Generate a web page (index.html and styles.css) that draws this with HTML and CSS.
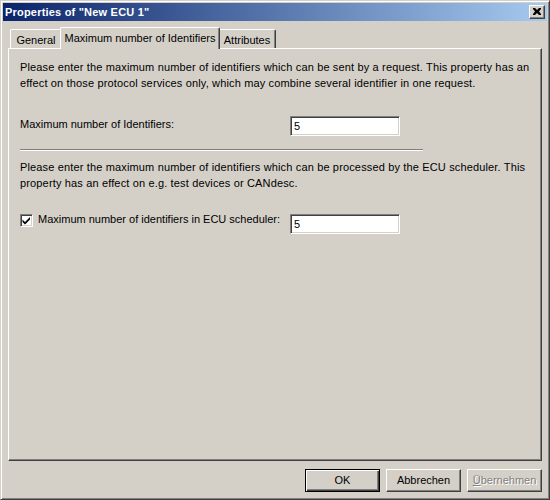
FILE: index.html
```html
<!DOCTYPE html>
<html>
<head>
<meta charset="utf-8">
<link rel="stylesheet" href="styles.css">
</head>
<body>
<div class="window">
  <div class="titlebar">
    <span class="title">Properties of "New ECU 1"</span>
    <span class="close"><svg width="8" height="7" viewBox="0 0 8 7"><path d="M0 0h2l2 2 2-2h2v1l-2 2.5 2 2.5v1h-2l-2-2-2 2h-2v-1l2-2.5-2-2.5z" fill="#000"/></svg></span>
  </div>
  <div class="body">
    <div class="tabs">
      <div class="tab t-general">General</div>
      <div class="tab active t-max">Maximum number of Identifiers</div>
      <div class="tab t-attr">Attributes</div>
    </div>
    <div class="panel">
      <p class="para p1">Please enter the maximum number of identifiers which can be sent by a request. This property has an<br>effect on those protocol services only, which may combine several identifier in one request.</p>
      <div class="row r1">
        <span class="label">Maximum number of Identifiers:</span>
        <span class="field">5</span>
      </div>
      <div class="sep"></div>
      <p class="para p2">Please enter the maximum number of identifiers which can be processed by the ECU scheduler. This<br>property has an effect on e.g. test devices or CANdesc.</p>
      <div class="row r2">
        <span class="label chk-label"><span class="check"><svg width="9" height="9" viewBox="0 0 9 9"><path d="M0.5 3.5L3 6L8 1L8 3.5L3 8.5L0.5 6Z" fill="#000"/></svg></span>Maximum number of identifiers in ECU scheduler:</span>
        <span class="field">5</span>
      </div>
    </div>
    <div class="buttons">
      <span class="btn default"><span class="btn-in">OK</span></span>
      <span class="btn"><span class="btn-in">Abbrechen</span></span>
      <span class="btn disabled"><span class="btn-in"><u>Ü</u>bernehmen</span></span>
    </div>
  </div>
</div>
</body>
</html>
```
FILE: styles.css
```css
* { box-sizing: border-box; }
html, body { margin: 0; padding: 0; }
body {
  width: 550px;
  height: 500px;
  font-family: "Liberation Sans", Arial, sans-serif;
  font-size: 11px;
  line-height: 16px;
  color: #000;
  background: #d4d0c8;
}
.window {
  width: 550px;
  height: 500px;
  background: #d4d0c8;
  border-style: solid;
  border-width: 1px;
  border-color: #d4d0c8 #404040 #404040 #d4d0c8;
  box-shadow: inset 1px 1px 0 #fff, inset -1px -1px 0 #808080;
  padding: 2px;
  display: flex;
  flex-direction: column;
}
.titlebar {
  height: 18px;
  background: linear-gradient(to right, #0a246a, #a6caf0);
  display: flex;
  align-items: center;
  padding-left: 2px;
  padding-right: 2px;
}
.title {
  flex: 1;
  color: #fff;
  font-weight: bold;
  font-family: "Liberation Sans", Arial, sans-serif;
  font-size: 11px;
  letter-spacing: 0.2px;
}
.close {
  width: 16px;
  height: 14px;
  background: #d4d0c8;
  border-style: solid;
  border-width: 1px;
  border-color: #fff #404040 #404040 #fff;
  box-shadow: inset -1px -1px 0 #808080;
  display: flex;
  align-items: center;
  justify-content: center;
  padding-bottom: 1px;
}
.close svg { display: block; }
.body {
  flex: 1;
  display: flex;
  flex-direction: column;
  padding: 6px 5px 0 5px;
}
.tabs {
  display: flex;
  align-items: flex-end;
  height: 21px;
  padding-left: 2px;
}
.tab {
  height: 19px;
  background: #d4d0c8;
  border-style: solid;
  border-width: 1px 1px 0 1px;
  border-color: #fff #404040 #fff #fff;
  border-radius: 2px 2px 0 0;
  box-shadow: inset -1px 0 0 #808080;
  padding-top: 2px;
  text-align: center;
  white-space: nowrap;
}
.t-general { width: 52px; }
.t-max { width: 160px; }
.t-attr { width: 58px; }
.tab.active {
  height: 22px;
  margin: 0 -2px -1px -2px;
  position: relative;
  z-index: 1;
}
.panel {
  height: 413px;
  border-style: solid;
  border-width: 1px;
  border-color: #fff #404040 #404040 #fff;
  box-shadow: inset -1px -1px 0 #808080;
  padding: 10px 11px 0 11px;
}
.para {
  margin: 0;
  white-space: nowrap;
  letter-spacing: 0.15px;
}
.row {
  display: flex;
  align-items: flex-start;
}
.r1 { margin-top: 25px; }
.label {
  width: 270px;
  white-space: nowrap;
}
.field {
  width: 110px;
  height: 20px;
  background: #fff;
  border-style: solid;
  border-width: 1px;
  border-color: #808080 #fff #fff #808080;
  box-shadow: inset 1px 1px 0 #404040, inset -1px -1px 0 #d4d0c8;
  padding: 2px 0 0 3px;
  line-height: 14px;
}
.sep {
  width: 403px;
  height: 2px;
  margin-top: 13px;
  border-top: 1px solid #808080;
  border-bottom: 1px solid #fff;
}
.p2 { margin-top: 8px; }
.r2 { margin-top: 20px; }
.r2 .field { margin-top: 3px; }
.chk-label {
  display: flex;
  align-items: flex-start;
}
.check {
  width: 13px;
  height: 13px;
  margin-top: 3px;
  margin-right: 5px;
  background: #fff;
  border-style: solid;
  border-width: 1px;
  border-color: #808080 #fff #fff #808080;
  box-shadow: inset 1px 1px 0 #404040, inset -1px -1px 0 #d4d0c8;
  display: flex;
  align-items: center;
  justify-content: center;
}
.check svg { display: block; }
.buttons {
  display: flex;
  justify-content: flex-end;
  gap: 6px;
  margin-top: 8px;
  padding-right: 0;
}
.btn {
  width: 75px;
  height: 23px;
  background: #d4d0c8;
  border-style: solid;
  border-width: 1px;
  border-color: #fff #404040 #404040 #fff;
  box-shadow: inset -1px -1px 0 #808080;
  display: flex;
}
.btn-in {
  flex: 1;
  display: flex;
  align-items: center;
  justify-content: center;
  padding-bottom: 1px;
}
.btn.default {
  border: 1px solid #000;
  box-shadow: inset 1px 1px 0 #fff, inset -1px -1px 0 #404040, inset -2px -2px 0 #808080;
}
.btn.disabled .btn-in {
  color: #808080;
  text-shadow: 1px 1px 0 #fff;
}
.btn.disabled u { text-decoration-color: #808080; }
```
